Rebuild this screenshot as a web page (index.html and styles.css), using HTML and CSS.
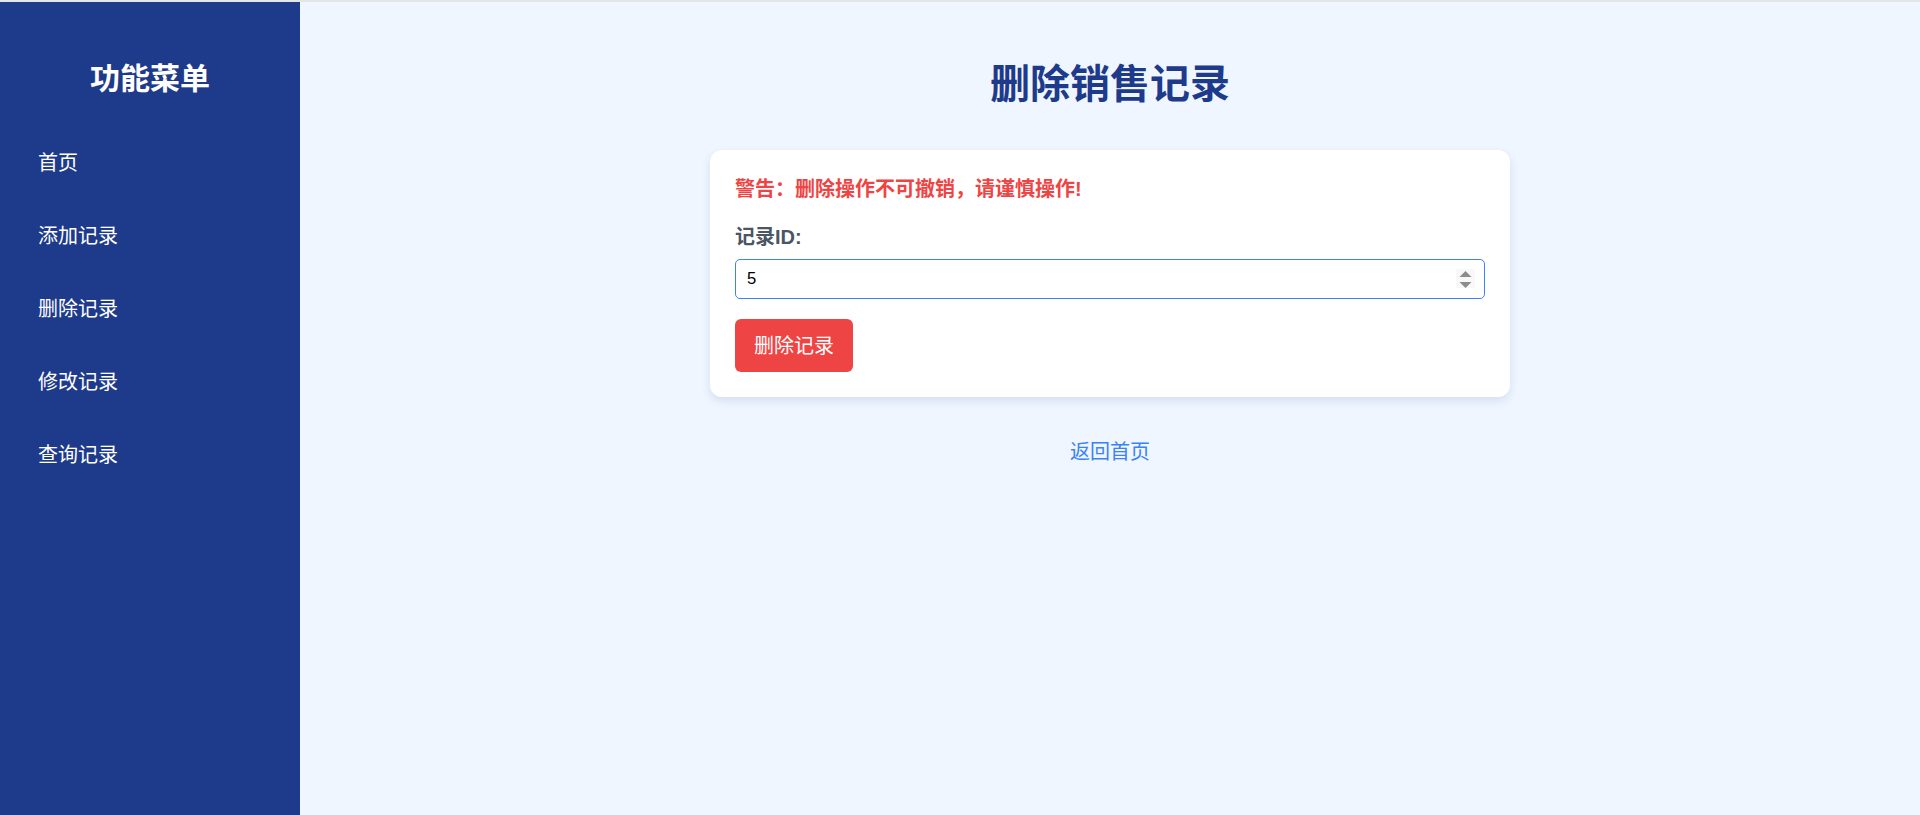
FILE: index.html
```html
<!DOCTYPE html>
<html lang="zh-CN">

<head>
    <meta charset="UTF-8">
    <title>删除销售记录</title>
    <link rel="stylesheet" href="styles.css">
</head>

<body>
    <div class="layout">
        <aside class="sidebar">
            <h2>功能菜单</h2>
            <nav class="menu">
                <a href="#">首页</a>
                <a href="#">添加记录</a>
                <a href="#">删除记录</a>
                <a href="#">修改记录</a>
                <a href="#">查询记录</a>
            </nav>
        </aside>

        <main class="main">
            <h1>删除销售记录</h1>
            <form class="card" onsubmit="return false;">
                <p class="warning">警告：删除操作不可撤销，请谨慎操作!</p>
                <label for="record-id">记录ID:</label>
                <div class="input-wrap">
                    <input type="number" id="record-id" value="5" autofocus>
                    <span class="spinner">
                        <svg width="19" height="19" viewBox="0 0 19 19">
                            <polygon points="3.5,8 15.5,8 9.5,2" fill="#8c8c8c" />
                            <polygon points="3.5,13 15.5,13 9.5,19" fill="#8c8c8c" />
                        </svg>
                    </span>
                </div>
                <button type="submit" class="btn-delete">删除记录</button>
            </form>
            <a href="#" class="back-link">返回首页</a>
        </main>
    </div>
</body>

</html>
```

FILE: styles.css
```css
html,
body {
    height: 100%;
}

body {
    margin: 0;
    border-top: 2px solid #e3e5e8;
    box-sizing: border-box;
    font-family: "Liberation Sans", "Noto Sans CJK SC", sans-serif;
    background-color: #eff6ff;
    color: #1f2937;
}

.layout {
    display: flex;
    height: 100%;
}

.sidebar {
    width: 300px;
    flex-shrink: 0;
    background-color: #1e3a8a;
    color: #fff;
    padding-top: 54px;
}

.sidebar h2 {
    margin: 0 0 25px;
    font-size: 30px;
    line-height: 45px;
    text-align: center;
    font-weight: bold;
}

.menu a {
    display: block;
    padding: 21.5px 38px;
    font-size: 20px;
    line-height: 30px;
    color: #fff;
    text-decoration: none;
}

.main {
    flex: 1;
    padding-top: 52px;
    text-align: center;
}

.main h1 {
    margin: 0 0 36px;
    font-size: 40px;
    line-height: 60px;
    color: #1e3a8a;
}

.card {
    width: 800px;
    box-sizing: border-box;
    margin: 0 auto;
    padding: 25px;
    background-color: #fff;
    border-radius: 12px;
    box-shadow: 0 4px 10px rgba(30, 58, 138, 0.12);
    text-align: left;
}

.warning {
    margin: 0 0 20px;
    font-size: 20px;
    line-height: 28px;
    font-weight: bold;
    color: #ef4444;
}

label {
    display: block;
    margin-bottom: 8px;
    font-size: 20px;
    line-height: 28px;
    font-weight: bold;
    color: #4b5563;
}

.input-wrap {
    position: relative;
}

.input-wrap input {
    display: block;
    width: 100%;
    height: 40px;
    box-sizing: border-box;
    padding: 0 40px 0 11px;
    border: 1px solid #3b82f6;
    border-radius: 5px;
    font-family: "Liberation Sans", sans-serif;
    font-size: 16.67px;
    font-weight: normal;
    color: #000;
    outline: none;
    -moz-appearance: textfield;
}

.input-wrap input::-webkit-inner-spin-button,
.input-wrap input::-webkit-outer-spin-button {
    -webkit-appearance: none;
    margin: 0;
}

.spinner {
    position: absolute;
    top: 10px;
    right: 10px;
    width: 19px;
    height: 19px;
    background-color: #f8f8f8;
    line-height: 0;
}

.btn-delete {
    margin-top: 20px;
    padding: 11.5px 19px;
    font-family: "Liberation Sans", "Noto Sans CJK SC", sans-serif;
    font-size: 20px;
    line-height: 30px;
    color: #fff;
    background-color: #ef4444;
    border: none;
    border-radius: 6px;
    cursor: pointer;
}

.btn-delete:hover {
    background-color: #dc2626;
}

.back-link {
    display: inline-block;
    margin-top: 40px;
    font-size: 20px;
    line-height: 30px;
    color: #3b82f6;
    text-decoration: none;
}
```
